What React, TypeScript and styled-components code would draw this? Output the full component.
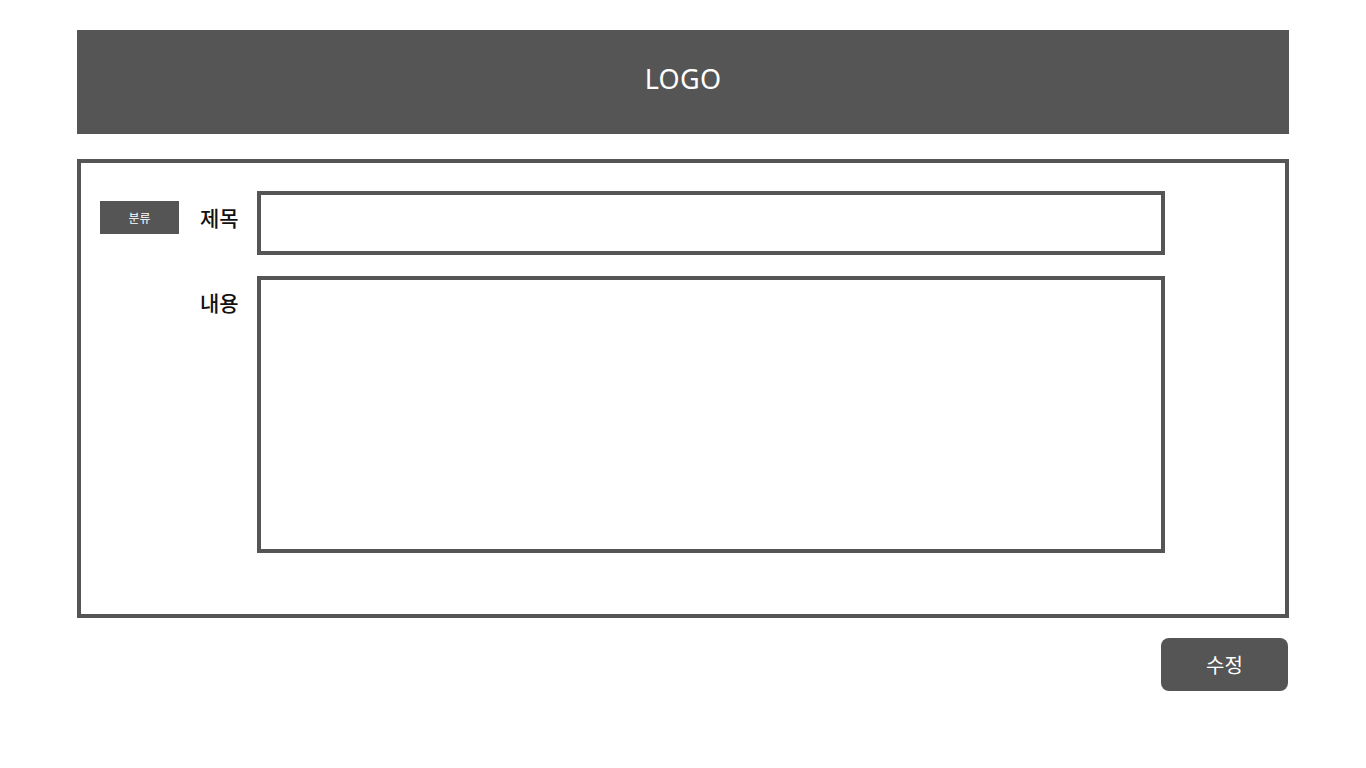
import React, { FC } from 'react'
import styled, { createGlobalStyle } from 'styled-components'

const GlobalStyle = createGlobalStyle`
  body {
    margin: 0;
    background: #ffffff;
    font-family: "Noto Sans", "Noto Sans CJK KR", sans-serif;
  }
`

const Page = styled.div`
  width: 1212px;
  margin: 30px auto 0;
  display: flex;
  flex-direction: column;
`

const Header = styled.header`
  height: 104px;
  box-sizing: border-box;
  padding-bottom: 8px;
  background: #555555;
  display: flex;
  align-items: center;
  justify-content: center;
`

const Logo = styled.h1`
  margin: 0;
  color: #ffffff;
  font-family: "Noto Sans", sans-serif;
  font-weight: 400;
  font-size: 27px;
  line-height: 1;
  letter-spacing: 0.3px;
`

const FormBox = styled.form`
  margin-top: 25px;
  height: 459px;
  box-sizing: border-box;
  border: 4px solid #555555;
  padding: 28px 120px 0 19px;
  display: grid;
  grid-template-columns: 79px 36px 908px;
  grid-template-rows: 64px 277px;
  column-gap: 21px;
  row-gap: 21px;
  align-items: start;
`

const Badge = styled.div`
  margin-top: 10px;
  height: 33px;
  background: #555555;
  color: #ffffff;
  font-size: 12px;
  display: flex;
  align-items: center;
  justify-content: center;
  font-family: "Noto Sans CJK KR", sans-serif;
`

const Label = styled.label`
  padding-top: 16px;
  font-size: 21px;
  line-height: 1;
  font-weight: 500;
  color: #111111;
  white-space: nowrap;
  font-family: "Noto Sans CJK KR", sans-serif;
`

const Field = styled.div<{ tall?: boolean }>`
  height: ${({ tall }) => (tall ? '277px' : '64px')};
  box-sizing: border-box;
  border: 4px solid #555555;
  background: #ffffff;
`

const Footer = styled.div`
  display: flex;
  justify-content: flex-end;
  margin-top: 20px;
  padding-right: 1px;
`

const Button = styled.button`
  width: 127px;
  height: 53px;
  border: none;
  border-radius: 8px;
  background: #555555;
  color: #ffffff;
  font-size: 20px;
  font-family: "Noto Sans CJK KR", sans-serif;
  cursor: pointer;
`

const App: FC = () => {
  return (
    <>
      <GlobalStyle />
      <Page>
        <Header>
          <Logo>LOGO</Logo>
        </Header>

        <FormBox>
          <Badge>분류</Badge>
          <Label>제목</Label>
          <Field />

          <div />
          <Label>내용</Label>
          <Field tall />
        </FormBox>

        <Footer>
          <Button type="button">수정</Button>
        </Footer>
      </Page>
    </>
  )
}

export default App
